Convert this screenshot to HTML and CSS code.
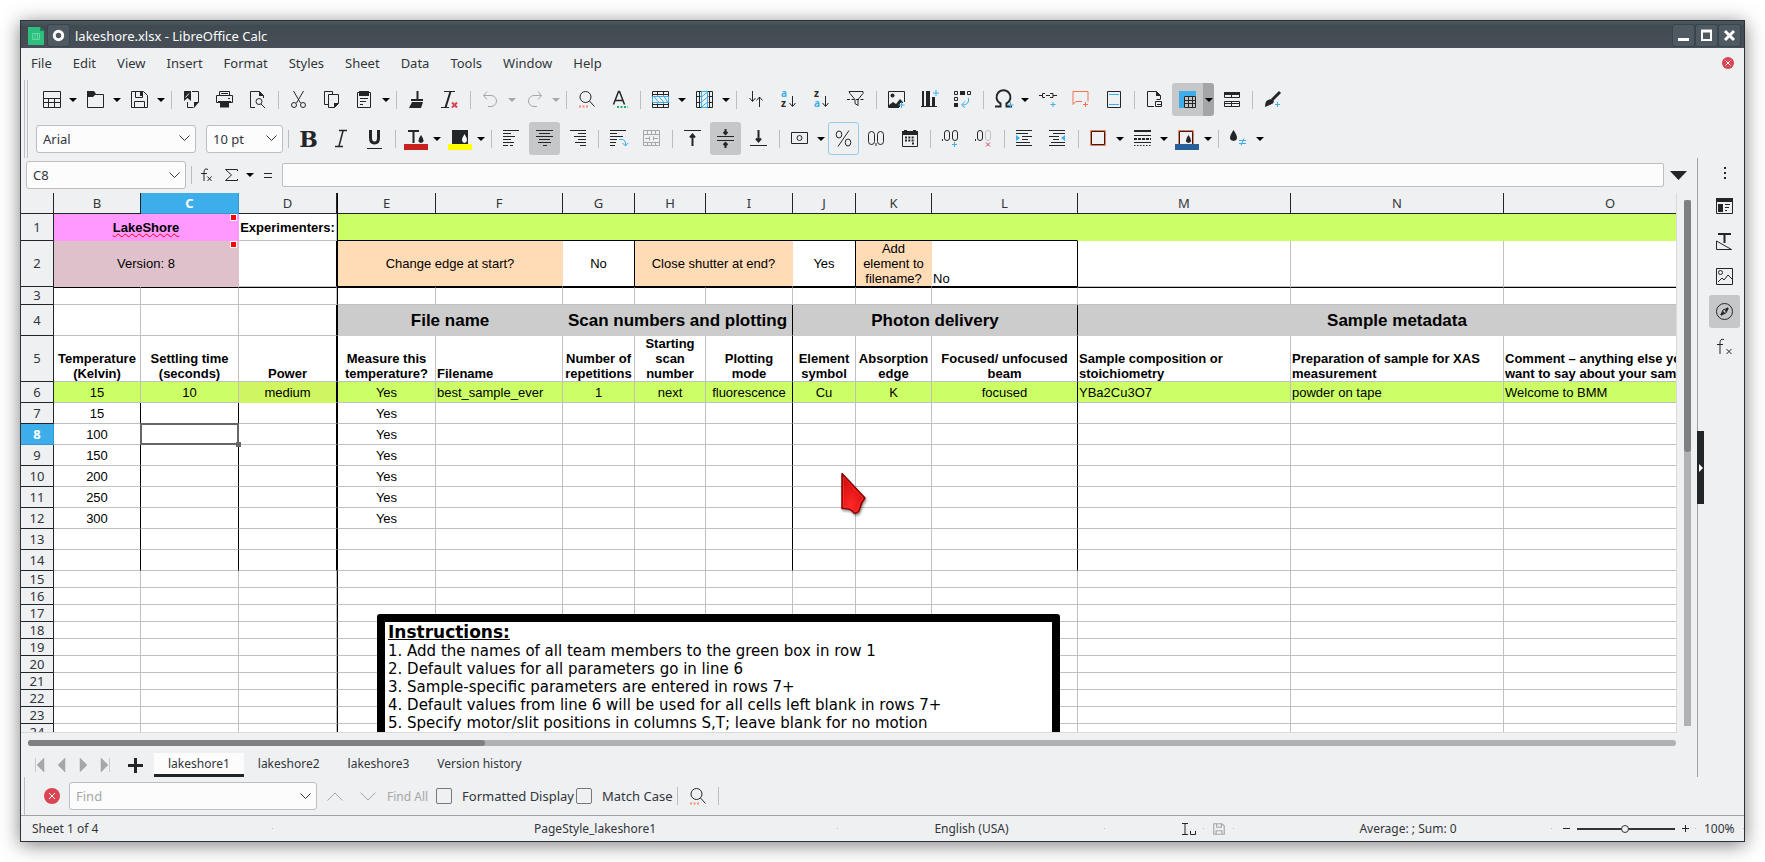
FILE: index.html
```html
<!DOCTYPE html>
<html lang="en">

<head>
  <meta charset="UTF-8">
  <meta name="viewport" content="width=device-width, initial-scale=1.0">
  <title>lakeshore.xlsx - LibreOffice Calc</title>
  <link rel="stylesheet" href="styles.css">
</head>

<body>
  <div class="window">
    <header class="titlebar">
      <svg class="app-icon" viewBox="0 0 16 18"><path d="M0 0h12l4 4v14H0z" fill="#2dbd7e"/><path d="M12 0l4 4h-4z" fill="#1b7c52"/><path d="M4.500 6.500h7v6h-7zM7 6.500v6M9.500 6.500v6" stroke="#5fd8a2" fill="none"/></svg>
      <button class="win-btn pin" aria-label="Pin"><svg viewBox="0 0 21 21"><circle cx="10.500" cy="10.500" r="4.200" stroke="#fcfcfc" stroke-width="3"/></svg></button>
      <span class="title">lakeshore.xlsx - LibreOffice Calc</span>
      <button class="win-btn" aria-label="Minimize"><svg viewBox="0 0 21 21"><path d="M5 14.500h11" stroke="#fcfcfc" stroke-width="3"/></svg></button>
      <button class="win-btn" aria-label="Maximize"><svg viewBox="0 0 21 21"><path d="M6 6v9h9V6z" stroke="#fcfcfc" stroke-width="2"/><path d="M5 6h11" stroke="#fcfcfc" stroke-width="3"/></svg></button>
      <button class="win-btn" aria-label="Close"><svg viewBox="0 0 21 21"><path d="M6 6l9 9M15 6l-9 9" stroke="#fcfcfc" stroke-width="3"/></svg></button>
    </header>

    <nav class="menubar">
      <a href="#">File</a>
      <a href="#">Edit</a>
      <a href="#">View</a>
      <a href="#">Insert</a>
      <a href="#">Format</a>
      <a href="#">Styles</a>
      <a href="#">Sheet</a>
      <a href="#">Data</a>
      <a href="#">Tools</a>
      <a href="#">Window</a>
      <a href="#">Help</a>
      <button class="close-doc" aria-label="Close document"><svg viewBox="0 0 12 12"><circle cx="6" cy="6" r="6" fill="#da4453" stroke="none"/><path d="M3.500 3.500l5 5M8.500 3.500l-5 5" stroke="#fff"/></svg></button>
    </nav>

    <div class="toolbars">
      <!-- standard toolbar -->
      <div class="toolbar standard">
        <button class="tool" aria-label="New"><svg viewBox="0 0 21 21"><path d="M2.500 2.500h17v16h-17zM2.500 9.500h17M2.500 13.500h17M7.500 9.500v9M13.500 9.500v9"/></svg></button><button class="drop" aria-label="New options"></button>
        <button class="tool" aria-label="Open"><svg viewBox="0 0 21 21"><path d="M2.500 18.500v-16h6l2 3h8v13z"/><path d="M2 2h7l2 3-3 3H2z" class="f"/></svg></button><button class="drop" aria-label="Open options"></button>
        <button class="tool" aria-label="Save"><svg viewBox="0 0 21 21"><path d="M2.500 2.500h12l4 4v12h-16zM6.500 2.500v6h7v-6M5.500 18.500v-6h10v6"/><path d="M11 3h2v4h-2z" class="f"/></svg></button><button class="drop" aria-label="Save options"></button>
        <i class="sep"></i>
        <button class="tool" aria-label="Export as PDF"><svg viewBox="0 0 21 21"><path d="M11 2.500h6.500v11M6.500 13v5.500h6"/><path d="M3 2h7v10l-3.500-3L3 12zM13 13h5l-5 6z" class="f"/><path d="M4.500 8.500L8 4.500" stroke="#eff0f1"/></svg></button>
        <button class="tool" aria-label="Print"><svg viewBox="0 0 21 21"><path d="M5.500 6V2.500h10V6M5 13.500H2.500v-7h16v7H16M7 4.500h7"/><path d="M4 12h13v2h-2v4.500H6V14H4z" class="f"/><path d="M14 9.500h2" /></svg></button>
        <button class="tool" aria-label="Print preview"><svg viewBox="0 0 21 21"><path d="M8 18.500H3.500v-16h9l4 4V9"/><path d="M12 2l5 5h-5z" class="f"/><circle cx="12" cy="12.500" r="3"/><path d="M14 15l4 4"/></svg></button>
        <i class="sep"></i>
        <button class="tool" aria-label="Cut"><svg viewBox="0 0 21 21"><path d="M5.500 2l7 12M15.500 2l-7 12"/><circle cx="6" cy="16" r="2.500"/><circle cx="15" cy="16" r="2.500"/></svg></button>
        <button class="tool" aria-label="Copy"><svg viewBox="0 0 21 21"><path d="M7 15.500H3.500v-13h8v3M7.500 5.500h10v9l-4 4h-6z"/><path d="M13 14h5l-5 5z" class="f"/></svg></button>
        <button class="tool" aria-label="Paste"><svg viewBox="0 0 21 21"><path d="M3.500 3.500h13v15h-13zM6 9.500h8M6 12.500h6M6 15.500h3"/><path d="M5 2h10v5H5z" class="f"/></svg></button><button class="drop" aria-label="Paste options"></button>
        <i class="sep"></i>
        <button class="tool" aria-label="Clone formatting"><svg viewBox="0 0 21 21"><path d="M11.500 2v9" stroke-width="2"/><path d="M5 10h12v2H5zM6 13h11l-2 6H3z" class="f"/></svg></button>
        <button class="tool" aria-label="Clear formatting"><svg viewBox="0 0 21 21"><path d="M5 2.500h11M2 18.500h8"/><path d="M11.500 2.500l-5 16" stroke-width="2"/><path d="M13 13.500l5 5M18 13.500l-5 5" stroke="#da4453" stroke-width="2"/></svg></button>
        <i class="sep"></i>
        <button class="tool off" aria-label="Undo"><svg viewBox="0 0 21 21"><path d="M7 2.500l-3.500 4L7 10.500M4 6.500h7a5.500 5.500 0 0 1 0 11H8"/></svg></button><button class="drop off" aria-label="Undo options"></button>
        <button class="tool off" aria-label="Redo"><svg viewBox="0 0 21 21"><path d="M14 2.500l3.500 4-3.500 4M17 6.500h-7a5.500 5.500 0 0 0 0 11h3"/></svg></button><button class="drop off" aria-label="Redo options"></button>
        <i class="sep"></i>
        <button class="tool" aria-label="Find and replace"><svg viewBox="0 0 21 21"><circle cx="9.500" cy="8" r="5.500"/><path d="M13.500 12l5 5.500"/><path d="M3 17.500h10" stroke="#f67450" stroke-opacity=".8" stroke-width="2" stroke-dasharray="2 1.500"/></svg></button>
        <button class="tool" aria-label="Spelling"><svg viewBox="0 0 21 21"><path d="M4.500 15.500L9.500 2.500h1L15.500 15.500M6.500 11.500h8" stroke-width="1.500"/><path d="M8 18h11" stroke="#27ae60" stroke-width="2" stroke-dasharray="2 1.500"/></svg></button>
        <i class="sep"></i>
        <button class="tool" aria-label="Row"><svg viewBox="0 0 21 21"><path d="M2.500 2.500h16v16h-16zM2.500 5.500h16M2.500 15.500h16M7.500 2.500v4M13.500 2.500v4M7.500 14.500v4M13.500 14.500v4"/><path d="M2.500 7.500h16v6h-16zM4 7.500l5 6M9 7.500l5 6M14 7.500l4 6" class="b"/></svg></button><button class="drop" aria-label="Row options"></button>
        <button class="tool" aria-label="Column"><svg viewBox="0 0 21 21"><path d="M2.500 2.500h16v16h-16zM5.500 2.500v16M15.500 2.500v16M2.500 7.500h4M2.500 13.500h4M14.500 7.500h4M14.500 13.500h4"/><path d="M7.500 2.500h6v16h-6zM7.500 8l6-5M7.500 13l6-5M7.500 18l6-5" class="b"/></svg></button><button class="drop" aria-label="Column options"></button>
        <i class="sep"></i>
        <button class="tool" aria-label="Sort"><svg viewBox="0 0 21 21"><path d="M6.500 2v10M3.500 9l3 3.500 3-3.500M13.500 18V8M10.500 11.500l3-3.500 3 3.500"/></svg></button>
        <button class="tool" aria-label="Sort ascending"><svg viewBox="0 0 21 21"><text x="2" y="8" class="b">a</text><text x="2" y="18">z</text><path d="M13.500 7v10M10.500 14l3 3.500 3-3.500"/></svg></button>
        <button class="tool" aria-label="Sort descending"><svg viewBox="0 0 21 21"><text x="2" y="8">z</text><text x="2" y="18" class="b">a</text><path d="M13.500 7v10M10.500 14l3 3.500 3-3.500"/></svg></button>
        <button class="tool" aria-label="AutoFilter"><svg viewBox="0 0 21 21"><path d="M4 2.500h14v2l-5 6v6l-3-2v-4l-5-6z"/><path d="M2 10.500h17" stroke-dasharray="3 1.500"/></svg></button>
        <i class="sep"></i>
        <button class="tool" aria-label="Insert image"><svg viewBox="0 0 21 21"><path d="M13 18.500H2.500v-16h16V13"/><path d="M3 16l4-3 3 2 4-5 3 3v1h-3v4H3z" class="f"/><circle cx="6.500" cy="6.500" r="2" class="f"/><path d="M15.500 13v6M12.500 16h6" class="b"/></svg></button>
        <button class="tool" aria-label="Insert chart"><svg viewBox="0 0 21 21"><path d="M2 17.500h16" /><path d="M3 2h2v16H3zM7 2h4v16H7zM13 8h3v10h-3z" class="f"/><path d="M17 1v6M14 4h6" class="b"/></svg></button>
        <button class="tool" aria-label="Insert pivot table"><svg viewBox="0 0 21 21"><path d="M2.500 2.500h3v3h-3zM15.500 2.500h3v3h-3zM2.500 8.500h3v3h-3z"/><path d="M8 2h5v4H8zM2 14h4v4H2z" class="f"/><path d="M16.500 9q1 7-6 7M13 12.500l-3.500 3.500 3.500 2.500" class="b"/></svg></button>
        <i class="sep"></i>
        <button class="tool" aria-label="Special character"><svg viewBox="0 0 21 21"><path d="M2 17.500h5.500v-3a7 7 0 1 1 6 0v3H19" stroke-width="2"/><path d="M17.500 13v6M14.500 16h6" class="b"/></svg></button><button class="drop" aria-label="Special character options"></button>
        <button class="tool" aria-label="Insert hyperlink"><svg viewBox="0 0 21 21"><path d="M2 6.500h4M8 4.500H5.500v4H8M9 6.500h4M13 4.500h3v4h-3M16 6.500h4"/><path d="M16 13v5M13.500 15.500h5" class="b"/></svg></button>
        <button class="tool" aria-label="Insert comment"><svg viewBox="0 0 21 21"><path d="M12 12.500H6l-3 3v-13h15v10M15.500 13v5M13 15.500h5" stroke="#f67450" /></svg></button>
        <button class="tool" aria-label="Headers and footers"><svg viewBox="0 0 21 21"><path d="M4.500 2.500h13v16h-13z"/><path d="M6 5.500h10M6 15.500h10" class="b"/></svg></button>
        <i class="sep"></i>
        <button class="tool" aria-label="Print area"><svg viewBox="0 0 21 21"><path d="M10 17.500H3.500v-15h9l4 4V10M11.500 12.500h6v5h-6z"/><path d="M12 2l5 5h-5z" class="f"/><path d="M12.500 10.500h4M13 15.500h4"/></svg></button>
        <button class="tool on split" aria-label="Freeze rows and columns"><svg viewBox="0 0 21 21"><path d="M2 2h17v5H7v12H2z" fill="#3daee9" stroke="none"/><path d="M7.500 7.500h11v11h-11zM7.500 11.500h11M7.500 14.500h11M11.500 7.500v11M15.500 7.500v11"/></svg></button><button class="drop on" aria-label="Freeze options"></button>
        <button class="tool" aria-label="Split window"><svg viewBox="0 0 21 21"><path d="M3.500 3.500h15v5h-15zM3.500 12.500h15v5h-15zM10.500 6v2.500M10.500 13v4M3 14.500h15"/><path d="M3 3h16v3H3z" class="f"/></svg></button>
        <i class="sep"></i>
        <button class="tool" aria-label="Show draw functions"><svg viewBox="0 0 21 21"><path d="M18 2L9.500 11M9 10l3 2-1 2.500Q7 16 3 18q0-6 3-7z" class="f"/><path d="M18 3L10 11" stroke-width="3"/><path d="M15.500 13v5M13 15.500h5" class="b"/></svg></button>
      </div>

      <!-- formatting toolbar -->
      <div class="toolbar formatting">
        <select class="combo font-name" aria-label="Font name"><option>Arial</option></select>
        <select class="combo font-size" aria-label="Font size"><option>10 pt</option></select>
        <i class="sep"></i>
        <button class="tool bold" aria-label="Bold">B</button>
        <button class="tool" aria-label="Italic"><svg viewBox="0 0 21 21"><path d="M8 2.500h8M4 18.500h8M12 3L8 18" stroke-width="1.500"/></svg></button>
        <button class="tool" aria-label="Underline"><svg viewBox="0 0 21 21"><path d="M6.500 2v8q0 5 4 5t4-5V2" stroke-width="3"/><path d="M3 20.500h15"/></svg></button>
        <i class="sep"></i>
        <button class="tool" aria-label="Font color"><svg viewBox="0 0 21 21"><path d="M3 3h11M8.500 3v12" stroke-width="2"/><path d="M16 7q5 7 0 8-5-1 0-8z" class="f"/><path d="M-1 16h24v6H-1z" fill="#c9211e" stroke="none"/></svg></button><button class="drop" aria-label="Font color options"></button>
        <button class="tool" aria-label="Background color"><svg viewBox="0 0 21 21"><path d="M3 2h16v15H3z" class="f"/><path d="M15.500 6q5 8 0 9-5-1 0-9z" fill="#fff" stroke="none"/><path d="M-1 16h24v6H-1z" fill="#ffff00" stroke="none"/></svg></button><button class="drop" aria-label="Background color options"></button>
        <i class="sep"></i>
        <button class="tool" aria-label="Align left"><svg viewBox="0 0 21 21"><path d="M2 2.500h16M2 5.500h8M2 8.500h12M2 11.500h8M2 14.500h11M2 17.500h5M9 17.500h3"/></svg></button>
        <button class="tool on" aria-label="Center horizontally"><svg viewBox="0 0 21 21"><path d="M2 2.500h17M5 5.500h11M2 8.500h17M5 11.500h11M4 14.500h13M9 17.500h4"/></svg></button>
        <button class="tool" aria-label="Align right"><svg viewBox="0 0 21 21"><path d="M3 2.500h16M11 5.500h8M7 8.500h12M11 11.500h8M8 14.500h11M13 17.500h6"/></svg></button>
        <i class="sep"></i>
        <button class="tool" aria-label="Wrap text"><svg viewBox="0 0 21 21"><path d="M2 2.500h16M2 5.500h7M2 8.500h13M2 11.500h7M2 14.500h6M2 17.500h5"/><path d="M11 11.500h3q4 0 3.500 6M14.500 15l3 3 2.500-3" class="b"/></svg></button>
        <button class="tool off" aria-label="Merge and center"><svg viewBox="0 0 21 21"><path d="M2.500 2.500h16v15h-16zM2.500 6.500h16M2.500 14.500h16M6.500 2.500v4M10.500 2.500v4M14.500 2.500v4M6.500 14.500v3M10.500 14.500v3M14.500 14.500v3M4 10.500h4M13 10.500h4M8.500 8.500v4M12.500 8.500v4"/></svg></button>
        <i class="sep"></i>
        <button class="tool" aria-label="Align top"><svg viewBox="0 0 21 21"><path d="M2 2.500h17"/><path d="M10.500 8v10M8 9.500l2.500-3 2.500 3" stroke-width="2"/></svg></button>
        <button class="tool on" aria-label="Center vertically"><svg viewBox="0 0 21 21"><path d="M2 8.500h17M2 12.500h17"/><path d="M10.500 1v4M8.500 4l2 2 2-2M10.500 20v-4M8.500 17l2-2 2 2" stroke-width="2"/></svg></button>
        <button class="tool" aria-label="Align bottom"><svg viewBox="0 0 21 21"><path d="M2 17.500h17"/><path d="M10.500 2v10M8 10.500l2.500 3 2.500-3" stroke-width="2"/></svg></button>
        <i class="sep"></i>
        <button class="tool" aria-label="Currency"><svg viewBox="0 0 21 21"><path d="M2.500 4.500h16v11h-16z"/><circle cx="10.500" cy="10" r="2.500"/></svg></button><button class="drop" aria-label="Currency options"></button>
        <button class="tool outlined" aria-label="Percent"><svg viewBox="0 0 21 21"><ellipse cx="6" cy="6.500" rx="2.800" ry="3.500"/><ellipse cx="15" cy="14.500" rx="2.800" ry="3.500"/><path d="M16 2.500L5 18.500"/></svg></button>
        <button class="tool" aria-label="Number"><svg viewBox="0 0 21 21"><rect x="2.500" y="3.500" width="6" height="13" rx="3"/><rect x="11.500" y="3.500" width="6" height="13" rx="3"/><path d="M10 15v3"/></svg></button>
        <button class="tool" aria-label="Date"><svg viewBox="0 0 21 21"><path d="M3.500 4.500h15v14h-15z"/><path d="M3 3h2V2h3v1h6V2h3v1h2v4H3z" class="f"/><path d="M6 9.500h10M6 12.500h10M13 15.500h3" stroke-dasharray="2 1.300" stroke-width="2"/></svg></button>
        <i class="sep"></i>
        <button class="tool" aria-label="Add decimal place"><svg viewBox="0 0 21 21"><rect x="4.500" y="2.500" width="5" height="10" rx="2.500"/><rect x="12.500" y="2.500" width="5" height="10" rx="2.500"/><path d="M2.500 11v2"/><path d="M14.500 14v5M12 16.500h5" class="b"/></svg></button>
        <button class="tool" aria-label="Delete decimal place"><svg viewBox="0 0 21 21"><rect x="4.500" y="2.500" width="5" height="10" rx="2.500"/><rect x="12.500" y="2.500" width="5" height="10" rx="2.500" stroke="#bdc3c7"/><path d="M2.500 11v2"/><path d="M13 14.500l4 4M17 14.500l-4 4" stroke="#da4453"/></svg></button>
        <i class="sep"></i>
        <button class="tool" aria-label="Increase indent"><svg viewBox="0 0 21 21"><path d="M2 2.500h16M2 5.500h12M8 8.500h10M8 11.500h6M2 14.500h14M2 17.500h16"/><path d="M2 7l4 3-4 3z" fill="#3daee9" stroke="none"/></svg></button>
        <button class="tool" aria-label="Decrease indent"><svg viewBox="0 0 21 21"><path d="M2 2.500h16M6 5.500h12M2 8.500h10M6 11.500h6M4 14.500h14M2 17.500h16"/><path d="M18 7l-4 3 4 3z" fill="#3daee9" stroke="none"/></svg></button>
        <i class="sep"></i>
        <button class="tool" aria-label="Borders"><svg viewBox="0 0 21 21"><path d="M2.500 2.500h15v15h-15z" stroke="#f67450"/><path d="M3.500 3.500h13v13h-13z"/></svg></button><button class="drop" aria-label="Borders options"></button>
        <button class="tool" aria-label="Border style"><svg viewBox="0 0 21 21"><path d="M2 3h17" stroke-width="2"/><path d="M2 7.500h17M2 14.500h17"/><path d="M2 11h17" stroke-width="2" stroke-dasharray="3 1"/><path d="M2 17.500h17" stroke-dasharray="1.500 1.500"/></svg></button><button class="drop" aria-label="Border style options"></button>
        <button class="tool" aria-label="Border color"><svg viewBox="0 0 21 21"><path d="M2.500 18V2.500h15V18" stroke="#f67450"/><path d="M3.500 18V3.500h13V18"/><path d="M12.500 7q5 7 0 8-5-1 0-8z" class="f"/><path d="M-1 16h24v6H-1z" fill="#2a6099" stroke="none"/></svg></button><button class="drop" aria-label="Border color options"></button>
        <i class="sep"></i>
        <button class="tool" aria-label="Conditional formatting"><svg viewBox="0 0 21 21"><path d="M5.500 2q7 10 0 11-7-1 0-11z" class="f"/><path d="M11 12.500h7M11 15.500h7M16 10.500l-3 7" class="b"/></svg></button><button class="drop" aria-label="Conditional formatting options"></button>
      </div>
    </div>

    <div class="main">
      <div class="document">
        <div class="formula-bar">
          <select class="combo name-box" aria-label="Name box"><option>C8</option></select>
          <i class="sep"></i>
          <button class="tool small" aria-label="Function wizard"><svg viewBox="0 0 21 21"><path d="M12 4.500q-4-2-4 3V16M5 8.500h6M11.500 11.500l4 4.500M15.500 11.500l-4 4.500"/></svg></button>
          <button class="tool small" aria-label="Select function"><svg viewBox="0 0 21 21"><path d="M16.500 6V4.500h-12l6 5.500-6 5.500h12V14"/></svg></button><button class="drop" aria-label="Function options"></button>
          <button class="tool small" aria-label="Formula"><svg viewBox="0 0 21 21"><path d="M7 8.500h8M7 12.500h8"/></svg></button>
          <input class="formula" type="text" aria-label="Formula input">
          <button class="expand" aria-label="Expand formula bar"><svg viewBox="0 0 17 9"><path d="M0 0h17L8.500 9z" class="f"/></svg></button>
        </div>

        <div class="sheet-row">
          <div class="sheet">
            <table class="grid">
              <colgroup>
                <col class="c-head"><col class="c-b"><col class="c-c"><col class="c-d"><col class="c-e"><col class="c-f"><col class="c-g"><col class="c-h"><col class="c-i"><col class="c-j"><col class="c-k"><col class="c-l"><col class="c-wide"><col class="c-wide"><col class="c-wide">
              </colgroup>
              <thead>
                <tr>
                  <th></th><th>B</th><th class="current">C</th><th>D</th><th class="freeze">E</th><th>F</th><th>G</th><th>H</th><th>I</th><th>J</th><th>K</th><th>L</th><th>M</th><th>N</th><th>O</th>
                </tr>
              </thead>
              <tbody>
                <tr class="r1">
                  <th>1</th>
                  <td colspan="2" class="brand"><b><span class="misspelled">LakeShore</span></b><i class="note"></i></td>
                  <td class="strong">Experimenters:</td>
                  <td colspan="8" class="freeze green boxed"></td>
                  <td colspan="3" class="green"></td>
                </tr>
                <tr class="r2">
                  <th>2</th>
                  <td colspan="2" class="version">Version: 8<i class="note"></i></td>
                  <td class="vline"></td>
                  <td colspan="2" class="freeze peach">Change edge at start?</td>
                  <td class="under vline">No</td>
                  <td colspan="2" class="peach">Close shutter at end?</td>
                  <td class="under vline">Yes</td>
                  <td class="peach tight">Add element to filename?</td>
                  <td class="under vline left low">No</td>
                  <td></td><td></td><td></td>
                </tr>
                <tr class="r3">
                  <th>3</th><td></td><td></td><td></td><td class="freeze"></td><td></td><td></td><td></td><td></td><td></td><td></td><td></td><td></td><td></td><td></td>
                </tr>
                <tr class="r4">
                  <th>4</th><td></td><td></td><td class="vline"></td>
                  <td colspan="2" class="freeze section">File name</td>
                  <td colspan="3" class="section vline">Scan numbers and plotting</td>
                  <td colspan="3" class="section vline">Photon delivery</td>
                  <td colspan="3" class="section">Sample metadata</td>
                </tr>
                <tr class="r5">
                  <th>5</th>
                  <td>Temperature (Kelvin)</td>
                  <td>Settling time (seconds)</td>
                  <td class="vline">Power</td>
                  <td class="freeze">Measure this temperature?</td>
                  <td class="left">Filename</td>
                  <td>Number of repetitions</td>
                  <td>Starting scan number</td>
                  <td class="vline">Plotting<br>mode</td>
                  <td>Element symbol</td>
                  <td>Absorption edge</td>
                  <td class="vline">Focused/ unfocused beam</td>
                  <td class="left">Sample composition or stoichiometry</td>
                  <td class="left">Preparation of sample for XAS measurement</td>
                  <td class="left nowrap">Comment – anything else you<br>want to say about your sample</td>
                </tr>
                <tr class="r6">
                  <th>6</th><td>15</td><td>10</td><td class="vline power">medium</td><td class="freeze">Yes</td><td class="left">best_sample_ever</td><td>1</td><td>next</td><td class="vline">fluorescence</td><td>Cu</td><td>K</td><td class="vline">focused</td><td class="left">YBa2Cu3O7</td><td class="left">powder on tape</td><td class="left">Welcome to BMM</td>
                </tr>
                <tr class="entry">
                  <th>7</th><td>15</td><td></td><td></td><td class="freeze">Yes</td><td></td><td></td><td></td><td></td><td></td><td></td><td></td><td></td><td></td><td></td>
                </tr>
                <tr class="entry">
                  <th class="current">8</th><td>100</td><td class="selected"></td><td></td><td class="freeze">Yes</td><td></td><td></td><td></td><td></td><td></td><td></td><td></td><td></td><td></td><td></td>
                </tr>
                <tr class="entry">
                  <th>9</th><td>150</td><td></td><td></td><td class="freeze">Yes</td><td></td><td></td><td></td><td></td><td></td><td></td><td></td><td></td><td></td><td></td>
                </tr>
                <tr class="entry">
                  <th>10</th><td>200</td><td></td><td></td><td class="freeze">Yes</td><td></td><td></td><td></td><td></td><td></td><td></td><td></td><td></td><td></td><td></td>
                </tr>
                <tr class="entry">
                  <th>11</th><td>250</td><td></td><td></td><td class="freeze">Yes</td><td></td><td></td><td></td><td></td><td></td><td></td><td></td><td></td><td></td><td></td>
                </tr>
                <tr class="entry">
                  <th>12</th><td>300</td><td></td><td></td><td class="freeze">Yes</td><td></td><td></td><td></td><td></td><td></td><td></td><td></td><td></td><td></td><td></td>
                </tr>
                <tr class="entry">
                  <th>13</th><td></td><td></td><td></td><td class="freeze"></td><td></td><td></td><td></td><td></td><td></td><td></td><td></td><td></td><td></td><td></td>
                </tr>
                <tr class="entry">
                  <th>14</th><td></td><td></td><td></td><td class="freeze"></td><td></td><td></td><td></td><td></td><td></td><td></td><td></td><td></td><td></td><td></td>
                </tr>
                <tr>
                  <th>15</th><td></td><td></td><td></td><td class="freeze"></td><td></td><td></td><td></td><td></td><td></td><td></td><td></td><td></td><td></td><td></td>
                </tr>
                <tr>
                  <th>16</th><td></td><td></td><td></td><td class="freeze"></td><td></td><td></td><td></td><td></td><td></td><td></td><td></td><td></td><td></td><td></td>
                </tr>
                <tr>
                  <th>17</th><td></td><td></td><td></td><td class="freeze"></td><td></td><td></td><td></td><td></td><td></td><td></td><td></td><td></td><td></td><td></td>
                </tr>
                <tr>
                  <th>18</th><td></td><td></td><td></td><td class="freeze"></td><td></td><td></td><td></td><td></td><td></td><td></td><td></td><td></td><td></td><td></td>
                </tr>
                <tr>
                  <th>19</th><td></td><td></td><td></td><td class="freeze"></td><td></td><td></td><td></td><td></td><td></td><td></td><td></td><td></td><td></td><td></td>
                </tr>
                <tr>
                  <th>20</th><td></td><td></td><td></td><td class="freeze"></td><td></td><td></td><td></td><td></td><td></td><td></td><td></td><td></td><td></td><td></td>
                </tr>
                <tr>
                  <th>21</th><td></td><td></td><td></td><td class="freeze"></td><td></td><td></td><td></td><td></td><td></td><td></td><td></td><td></td><td></td><td></td>
                </tr>
                <tr>
                  <th>22</th><td></td><td></td><td></td><td class="freeze"></td><td></td><td></td><td></td><td></td><td></td><td></td><td></td><td></td><td></td><td></td>
                </tr>
                <tr>
                  <th>23</th><td></td><td></td><td></td><td class="freeze"></td><td></td><td></td><td></td><td></td><td></td><td></td><td></td><td></td><td></td><td></td>
                </tr>
                <tr>
                  <th>24</th><td></td><td></td><td></td><td class="freeze"></td><td></td><td></td><td></td><td></td><td></td><td></td><td></td><td></td><td></td><td></td>
                </tr>
              </tbody>
            </table>

            <!-- text box floating over the cells -->
            <div class="instructions">
              <h2>Instructions:</h2>
              <p>1. Add the names of all team members to the green box in row 1</p>
              <p>2. Default values for all parameters go in line 6</p>
              <p>3. Sample-specific parameters are entered in rows 7+</p>
              <p>4. Default values from line 6 will be used for all cells left blank in rows 7+</p>
              <p>5. Specify motor/slit positions in columns S,T; leave blank for no motion</p>
            </div>

            <svg class="pointer" viewBox="0 0 28 46">
              <defs>
                <radialGradient id="red" cx=".4" cy=".8" r=".8"><stop offset="0" stop-color="#ff2626"/><stop offset="1" stop-color="#cf0a0a"/></radialGradient>
              </defs>
              <path d="M2 1.500L25 26q-4 5-5 10-1 6-6 5-3-5-12-4.500z" fill="url(#red)" stroke="#8f0000" stroke-width="1.500" stroke-linejoin="round"/>
              <path d="M3.500 5L23 26q-4 5-5 11-2 3-4 2-3-4-10.500-4z" stroke="#f03a3a" stroke-opacity=".7" fill="none"/>
            </svg>
          </div>
          <div class="vscroll"><div class="thumb"></div></div>
        </div>

        <div class="hscroll"><div class="track"><div class="thumb"></div></div></div>

        <div class="tabs">
          <button class="nav" aria-label="First sheet"><svg viewBox="0 0 9 14"><path d="M.5 0v14"/><path d="M9 0v14L2 7z"/></svg></button>
          <button class="nav" aria-label="Previous sheet"><svg viewBox="0 0 9 14"><path d="M8 0v14L1 7z"/></svg></button>
          <button class="nav" aria-label="Next sheet"><svg viewBox="0 0 9 14"><path d="M1 0v14l7-7z"/></svg></button>
          <button class="nav" aria-label="Last sheet"><svg viewBox="0 0 9 14"><path d="M8.500 0v14"/><path d="M0 0v14l7-7z"/></svg></button>
          <button class="add" aria-label="Add sheet"><svg viewBox="0 0 15 15"><path d="M7.500 0v15M0 7.500h15" stroke-width="3"/></svg></button>
          <a href="#" class="tab active">lakeshore1</a>
          <a href="#" class="tab">lakeshore2</a>
          <a href="#" class="tab">lakeshore3</a>
          <a href="#" class="tab">Version history</a>
        </div>
      </div>

      <aside class="sidebar">
        <button class="hide" aria-label="Hide sidebar"><svg viewBox="0 0 4 8"><path d="M0 0l4 4-4 4z" fill="#fff" stroke="none"/></svg></button>
        <button class="tool settings" aria-label="Sidebar settings"><svg viewBox="0 0 21 21"><path d="M10 4h2v2h-2zM10 9h2v2h-2zM10 14h2v2h-2z" class="f"/></svg></button>
        <button class="tool" aria-label="Properties"><svg viewBox="0 0 21 21"><path d="M2.500 2.500h16v15h-16z"/><path d="M2 2h17v4H2zM4 8h5v8H4z" class="f"/><path d="M11 8.500h5M11 11.500h4M11 14.500h2"/></svg></button>
        <button class="tool" aria-label="Styles"><svg viewBox="0 0 21 21"><path d="M4 3h13M10.500 3v9" stroke-width="2"/><path d="M2.500 10v8.500h15z"/></svg></button>
        <button class="tool" aria-label="Gallery"><svg viewBox="0 0 21 21"><path d="M2.500 2.500h16v16h-16zM4 16l4-4 2 2 4-5 4 4"/><circle cx="6.500" cy="6.500" r="2"/></svg></button>
        <button class="tool on" aria-label="Navigator"><svg viewBox="0 0 21 21"><circle cx="10.500" cy="10.500" r="8"/><path d="M14 7l-2 5-5 2 2-5z"/><path d="M14 7l-2.500 3.500M7 14l3-3" stroke-width="2"/></svg></button>
        <button class="tool" aria-label="Functions"><svg viewBox="0 0 21 21"><path d="M10 3.500q-4-1-4 3V18M3 8.500h6M12.500 13l5 5M17.500 13l-5 5"/></svg></button>
      </aside>
    </div>

    <form class="findbar">
      <button type="button" class="close-find" aria-label="Close find bar"><svg viewBox="0 0 16 16"><circle cx="8" cy="8" r="8" fill="#da4453" stroke="none"/><path d="M5 5l6 6M11 5l-6 6" stroke="#fff"/></svg></button>
      <input class="combo find" type="text" placeholder="Find" aria-label="Find">
      <button type="button" class="step" aria-label="Find previous"><svg viewBox="0 0 16 9"><path d="M.5 8.500L8 1l7.500 7.500"/></svg></button>
      <button type="button" class="step" aria-label="Find next"><svg viewBox="0 0 16 9"><path d="M.5.5L8 8 15.500.5"/></svg></button>
      <button type="button" class="find-all">Find All</button>
      <label class="check"><input type="checkbox">Formatted Display</label>
      <label class="check"><input type="checkbox">Match Case</label>
      <i class="sep"></i>
      <button type="button" class="tool" aria-label="Find and replace dialog"><svg viewBox="0 0 21 21"><circle cx="9.500" cy="8" r="5.500"/><path d="M13.500 12l5 5.500"/><path d="M3 17.500h10" stroke="#f67450" stroke-opacity=".8" stroke-width="2" stroke-dasharray="2 1.500"/></svg></button>
      <i class="sep"></i>
    </form>

    <footer class="statusbar">
      <span>Sheet 1 of 4</span>
      <span></span>
      <span>PageStyle_lakeshore1</span>
      <span class="mid">English (USA)</span>
      <span></span>
      <span class="icon"><svg viewBox="0 0 16 14"><path d="M1 1.500h6M1 12.500h6M4 1.500v11M9.500 9v3.500h5V9"/></svg></span>
      <span class="icon off"><svg viewBox="0 0 12 12"><path d="M1.500 1.500h7l2 2v7h-9zM4 1.500v3h4v-3M3.500 10.500v-3h5v3"/></svg></span>
      <span></span>
      <span class="mid">Average: ; Sum: 0</span>
      <span class="zoom">
        <button aria-label="Zoom out"><svg viewBox="0 0 7 7"><path d="M0 3.500h7"/></svg></button>
        <input type="range" min="0" max="100" value="49" aria-label="Zoom">
        <button aria-label="Zoom in"><svg viewBox="0 0 7 7"><path d="M0 3.500h7M3.500 0v7"/></svg></button>
      </span>
      <span>100%</span>
    </footer>
  </div>
</body>

</html>
```
FILE: styles.css
```css
* {
  box-sizing: border-box;
}

body {
  margin: 0;
  height: 100vh;
  padding: 20px;
  background-color: white;
  color: #31363b;
  font-family: "Noto Sans", sans-serif;
  font-size: 13px;
}

button,
input,
select {
  font: inherit;
  color: inherit;
  margin: 0;
}

button {
  border: none;
  background: none;
  padding: 0;
  display: flex;
  align-items: center;
  justify-content: center;
}

a {
  color: inherit;
  text-decoration: none;
}

svg {
  display: block;
  overflow: visible;
  fill: none;
  stroke: #232629;
}

svg .f {
  fill: #232629;
  stroke: none;
}

svg .b {
  stroke: #3daee9;
}

svg text {
  font: bold 10px "Noto Sans", sans-serif;
  fill: #232629;
  stroke: none;
}

svg text.b {
  fill: #3daee9;
  stroke: none;
}

.window {
  height: 100%;
  display: flex;
  flex-direction: column;
  background-color: #eff0f1;
  border: 1px solid #2b3136;
  box-shadow: 0 3px 18px rgba(0, 0, 0, 0.5);
}

/* title and menu */
.titlebar {
  height: 27px;
  flex: none;
  display: flex;
  align-items: center;
  gap: 2px;
  padding: 2px 4px 0 7px;
  background: linear-gradient(#4c5a61, #414a51 20%, #474e57);
  color: #fcfcfc;
}

.app-icon {
  width: 16px;
  height: 18px;
  stroke: none;
  margin-right: 2px;
}

.win-btn {
  width: 21px;
  height: 21px;
  border-radius: 2px;
  background-color: #4e5961;
  box-shadow: 0 0 0 1px #3a444b;
}

.win-btn svg {
  width: 21px;
  height: 21px;
}

.title {
  flex: 1;
  padding-left: 4px;
}

.menubar {
  height: 32px;
  flex: none;
  display: flex;
  align-items: center;
  gap: 21px;
  padding: 0 10px 2px;
}

.close-doc {
  margin-left: auto;
}

.close-doc svg {
  width: 12px;
  height: 12px;
}

/* toolbars */
.toolbars {
  flex: none;
  margin-left: 3px;
  border-left: 1px solid #bdbec0;
}

.toolbar {
  height: 39px;
  display: flex;
  align-items: center;
  gap: 2px;
  margin-left: 2px;
  padding-left: 8px;
  border-left: 1px solid #bdbec0;
}

.tool {
  width: 31px;
  height: 33px;
  flex: none;
  border-radius: 3px;
}

.tool svg {
  width: 21px;
  height: 21px;
}

.tool.on {
  background-color: #c6c7c9;
}

.tool.split {
  border-radius: 3px 0 0 3px;
}

.tool.outlined {
  border: 1px solid #93cee9;
}

.tool.bold {
  font: bold 22px "DejaVu Serif", serif;
  color: #232629;
}

.drop {
  width: 11px;
  height: 33px;
  flex: none;
  margin-left: -2px;
}

.drop::after {
  content: "";
  border: 4px solid transparent;
  border-top-color: #000;
  border-bottom: 0;
}

.drop.on {
  background-color: #a3a5a7;
  border-radius: 0 3px 3px 0;
}

.drop.off::after {
  border-top-color: #a6a7a8;
}

.off svg {
  stroke: #a6a7a8;
}

.sep {
  width: 6px;
  height: 18px;
  flex: none;
  background: linear-gradient(#bdbec0, #bdbec0) center / 1px 100% no-repeat;
}

.combo {
  height: 28px;
  flex: none;
  padding: 0 24px 0 6px;
  border: 1px solid #bcbebf;
  border-radius: 3px;
  appearance: none;
  background: #fcfcfc url("data:image/svg+xml,%3Csvg xmlns='http://www.w3.org/2000/svg' width='11' height='7'%3E%3Cpath d='M.5.5l5 5 5-5' fill='none' stroke='%2331363b'/%3E%3C/svg%3E") right 5px center no-repeat;
}

.font-name {
  width: 160px;
  margin-right: 8px;
}

.font-size {
  width: 77px;
}

/* formula bar, sheet and sidebar */
.main {
  flex: 1;
  min-height: 0;
  display: flex;
}

.document {
  flex: 1;
  min-width: 0;
  display: flex;
  flex-direction: column;
}

.formula-bar {
  height: 35px;
  flex: none;
  display: flex;
  align-items: center;
  gap: 2px;
  padding: 0 6px 1px 5px;
}

.name-box {
  width: 160px;
}

.tool.small {
  width: 21px;
  margin-right: 2px;
}

.formula {
  flex: 1;
  height: 24px;
  border: 1px solid #bcbebf;
  border-radius: 2px;
  background-color: #fcfcfc;
}

.expand {
  width: 25px;
}

.expand svg {
  width: 17px;
  height: 9px;
}

.sheet-row {
  flex: 1;
  min-height: 0;
  display: flex;
}

.sheet {
  flex: 1;
  min-width: 0;
  position: relative;
  overflow: hidden;
  background-color: white;
  border: solid #d8d9da;
  border-width: 0 1px 1px 0;
}

.grid {
  width: 1696px;
  table-layout: fixed;
  border-collapse: separate;
  border-spacing: 0;
  color: black;
}

.c-head { width: 33px; }
.c-b { width: 87px; }
.c-c { width: 98px; }
.c-d { width: 98px; }
.c-e { width: 99px; }
.c-f { width: 127px; }
.c-g { width: 72px; }
.c-h { width: 71px; }
.c-i { width: 87px; }
.c-j { width: 63px; }
.c-k { width: 76px; }
.c-l { width: 146px; }
.c-wide { width: 213px; }

.grid th,
.grid td {
  height: 17px;
  padding: 0;
  border: solid #c0c0c0;
  border-width: 0 1px 1px 0;
  line-height: 15px;
  text-align: center;
}

.grid td {
  font-family: "Liberation Sans", Arial, sans-serif;
}

.grid th {
  background-color: #eff0f1;
  border-color: #232629;
  color: #31363b;
  font-weight: normal;
}

.grid thead th {
  height: 21px;
}

.grid .current {
  background-color: #3daee9;
  border-color: #3596cb;
  color: white;
  font-weight: bold;
}

.grid .freeze {
  border-left: 1px solid black;
}

.grid .vline {
  border-right-color: black;
}

.grid .left {
  padding-left: 1px;
  text-align: left;
}

.grid .low {
  vertical-align: bottom;
}

.grid .tight {
  padding: 0 6px;
}

.grid .r1 td { height: 27px; }
.grid .r2 td { height: 46px; }
.grid .r3 td { height: 18px; }
.grid .r4 td { height: 31px; }

.grid .r5 td {
  height: 46px;
  font-weight: bold;
  vertical-align: bottom;
}

.grid .r6 td,
.grid .entry td {
  height: 21px;
}

.grid .strong {
  font-weight: bold;
}

.grid .nowrap {
  white-space: nowrap;
}

.grid .brand,
.grid .version {
  position: relative;
  background-color: #ff99ff;
  border-color: #ff99ff;
}

.grid .version {
  background-color: #dfc1cb;
  border-color: #dfc1cb;
}

.misspelled {
  text-decoration: underline wavy #f00 1px;
}

.note {
  position: absolute;
  top: 0;
  right: 1px;
  width: 7px;
  height: 7px;
  border: 1px solid white;
  background-color: #f00;
}

.grid .green {
  background-color: #ccff66;
  border-color: #ccff66;
}

.grid .boxed {
  border-bottom-color: black;
}

.grid .peach {
  background-color: #ffdbb6;
  border-right-color: #ffdbb6;
  border-bottom-color: black;
}

.grid .under {
  border-bottom-color: black;
}

.grid .freeze.green {
  border-left-color: black;
}

.grid .r3 td {
  border-top: 1px solid black;
}

.grid .section {
  background-color: #cccccc;
  border-color: #cccccc;
  font-size: 17px;
  font-weight: bold;
}

.grid .section.vline {
  border-right-color: black;
}

.grid .section.freeze {
  border-left-color: black;
}

.grid .r6 td {
  background-color: #ccff66;
}

.grid .r6 .power {
  background-color: #cff561;
  border-bottom-color: #cff561;
}

.grid .entry td:nth-child(2),
.grid .entry td:nth-child(3),
.grid .entry td:nth-child(4),
.grid .entry td:nth-child(9),
.grid .entry td:nth-child(12) {
  border-right-color: black;
}

.grid .selected {
  position: relative;
}

.grid .selected::before {
  content: "";
  position: absolute;
  inset: -1px;
  border: 2px solid #666;
}

.grid .selected::after {
  content: "";
  position: absolute;
  right: -3px;
  bottom: -3px;
  width: 5px;
  height: 5px;
  background-color: #666;
}

.instructions {
  position: absolute;
  left: 356px;
  top: 421px;
  width: 683px;
  height: 200px;
  padding: 0 3px;
  border: 8px solid black;
  border-radius: 3px;
  background-color: white;
  color: black;
  font-family: "DejaVu Sans", sans-serif;
  font-size: 15px;
  line-height: 18px;
}

.instructions h2 {
  margin: 0;
  font-size: 17px;
  line-height: 20px;
  text-decoration: underline;
}

.instructions p {
  margin: 0;
}

.pointer {
  position: absolute;
  left: 819px;
  top: 279px;
  width: 28px;
  height: 46px;
  filter: drop-shadow(1px 2px 1px rgba(0, 0, 0, 0.4));
}

.vscroll {
  width: 20px;
  flex: none;
  padding: 7px 6px 7px 7px;
  background: linear-gradient(#b0b1b3, #b0b1b3) 7px 7px / 7px calc(100% - 14px) no-repeat;
}

.vscroll .thumb {
  height: 48%;
  border-radius: 3px;
  background-color: #7f8082;
}

.hscroll {
  height: 20px;
  flex: none;
  padding: 7px 21px 7px 7px;
}

.hscroll .track {
  height: 6px;
  border-radius: 3px;
  background-color: #b0b1b3;
}

.hscroll .thumb {
  width: 457px;
  height: 6px;
  border-radius: 3px;
  background-color: #7f8082;
}

.tabs {
  height: 24px;
  flex: none;
  display: flex;
  align-items: center;
  padding-left: 7px;
  font-size: 12px;
}

.nav {
  width: 22px;
}

.nav svg {
  width: 9px;
  height: 14px;
  fill: #a6a7a8;
  stroke: #a6a7a8;
  stroke-width: 0.5;
}

.add {
  width: 38px;
}

.add svg {
  width: 15px;
  height: 15px;
}

.tab {
  height: 24px;
  padding: 0 14px;
  line-height: 21px;
}

.tab.active {
  background-color: #fcfcfc;
  border-bottom: 3px solid #232629;
}

.sidebar {
  width: 47px;
  flex: none;
  position: relative;
  display: flex;
  flex-direction: column;
  align-items: center;
  gap: 2px;
  padding: 1px 0 0 6px;
  border-left: 1px solid #a0a2a4;
}

.sidebar .settings {
  height: 29px;
}

.hide {
  position: absolute;
  left: -1px;
  top: 273px;
  width: 7px;
  height: 73px;
  background-color: #232629;
}

.hide svg {
  width: 4px;
  height: 8px;
}

/* find bar */
.findbar {
  height: 38px;
  flex: none;
  display: flex;
  align-items: center;
  margin-left: 3px;
  padding-left: 19px;
  border-left: 1px solid #bdbec0;
}

.close-find svg {
  width: 16px;
  height: 16px;
}

.find {
  width: 248px;
  margin: 0 10px 0 9px;
}

.find::placeholder {
  color: #a6a7a8;
}

.step {
  width: 16px;
  margin-right: 17px;
}

.step svg {
  width: 16px;
  height: 9px;
  stroke: #a6a7a8;
}

.find-all {
  margin-left: -6px;
  margin-right: 8px;
  color: #a6a7a8;
  font-size: 12px;
}

.check {
  display: flex;
  align-items: center;
  gap: 10px;
  margin-right: 2px;
}

.check input {
  width: 16px;
  height: 16px;
  appearance: none;
  border: 1px solid #77797c;
  border-radius: 2px;
}

.findbar .tool {
  margin: 0 2px;
}

/* status bar */
.statusbar {
  height: 26px;
  flex: none;
  display: grid;
  grid-template-columns: 252fr 250fr 315fr 267fr 69fr 30px 30px 30px 288fr 144px 48px;
  align-items: center;
  border-top: 1px solid #a0a2a4;
  font-size: 12px;
}

.statusbar > span {
  padding-left: 11px;
  background: linear-gradient(#bdbec0, #bdbec0) right center / 1px 1px no-repeat;
  white-space: nowrap;
}

.statusbar > span:last-child {
  padding-left: 8px;
}

.statusbar .mid {
  padding: 0;
  text-align: center;
}

.statusbar .icon {
  display: flex;
  justify-content: center;
  padding: 0;
}

.icon svg {
  width: 16px;
  height: 14px;
}

.zoom {
  display: flex;
  align-items: center;
  gap: 7px;
}

.zoom svg {
  width: 7px;
  height: 7px;
}

.zoom input {
  width: 98px;
  height: 11px;
  appearance: none;
  background: linear-gradient(#31363b, #31363b) center / 100% 2px no-repeat;
}

.zoom input::-webkit-slider-thumb {
  appearance: none;
  width: 8px;
  height: 8px;
  border: 1px solid #31363b;
  border-radius: 50%;
  background-color: #eff0f1;
}
```
